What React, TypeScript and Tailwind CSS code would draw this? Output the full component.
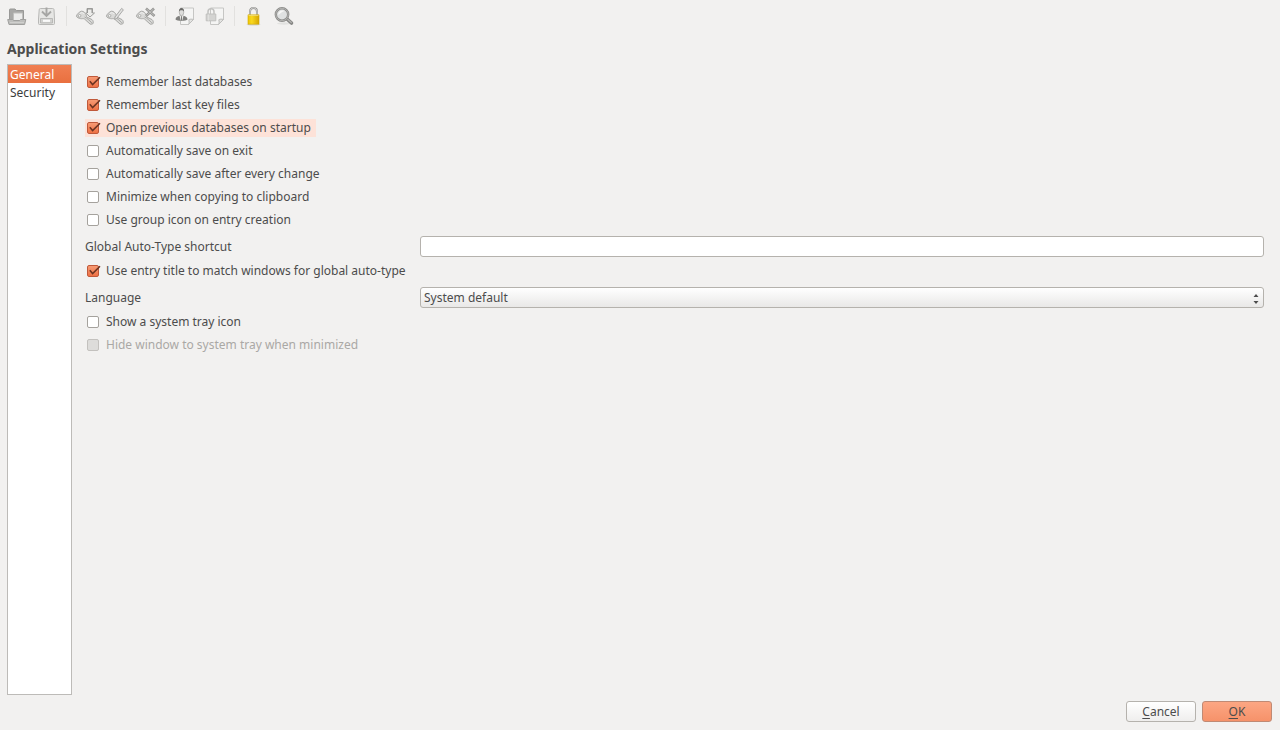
import { useState, type ReactNode } from 'react';

type ToolbarAction = {
  label: string;
  icon: ReactNode;
  disabled?: boolean;
};

function KeyIcon({ children }: { children: ReactNode }) {
  return (
    <svg viewBox="0 0 22 22" className="h-[22px] w-[22px]" aria-hidden="true">
      <path
        d="M1.5 11.2 C1.5 9.5 4.5 6.6 6.5 6.2 C8.5 6 10.8 8.3 11.2 10 C11.4 11 11.3 11.6 11.8 12 L17 14.6 C18.4 15.5 18.7 18 17.6 19 L15.2 19.2 L9.5 14 C8 13.2 7 14 5.5 13.6 C3.8 13.2 1.5 12.4 1.5 11.2 Z"
        fill="#dadad8"
        stroke="#a8a8a6"
        strokeLinejoin="round"
      />
      <path d="M9.5 12 C12 13 14.5 15.5 16.8 17.8" stroke="#aaaaa8" fill="none" />
      <path d="M5 8.5 C6.5 7.2 8 7.5 9 9" stroke="#efefee" fill="none" />
      <circle cx="4.6" cy="10.8" r="1.3" fill="#f4f4f3" stroke="#999997" strokeWidth="0.7" />
      {children}
    </svg>
  );
}

function OpenIcon() {
  return (
    <svg viewBox="0 0 22 22" className="h-[22px] w-[22px]" aria-hidden="true">
      <path d="M3.5 15 V4.8 C3.5 4.2 3.8 4 4.3 4 H9 L10.3 5.5 H17.5 V15 Z" fill="#a9a9a7" stroke="#989896" strokeLinejoin="round" />
      <path d="M7.5 8 H16.5 V15.5 H7.5 Z" fill="#ececeb" stroke="#c0c0be" />
      <path d="M1.7 14.5 H6.5 L7.5 15.5 H13.5 L14.5 14.5 H19.8 L18.6 19.5 H3 Z" fill="#bebebc" stroke="#a0a09e" strokeLinejoin="round" />
      <path d="M4 17.5 H18" stroke="#d0d0ce" />
    </svg>
  );
}

function SaveIcon() {
  return (
    <svg viewBox="0 0 22 22" className="h-[22px] w-[22px]" aria-hidden="true">
      <path d="M4.5 3.5 H16.5 C17.6 3.5 18 4 18 5 L18.5 14 V18.5 C18.5 19.2 18.2 19.5 17.5 19.5 H3.5 C2.8 19.5 2.5 19.2 2.5 18.5 V14 L3.2 5 C3.3 4 3.5 3.5 4.5 3.5 Z" fill="#e6e6e4" stroke="#b8b8b6" />
      <path d="M4.5 13.5 H16.5 V18 H4.5 Z" fill="#d2d2d0" stroke="#b8b8b6" />
      <path d="M7 15.8 H14" stroke="#fafafa" strokeWidth="2.2" />
      <path d="M10.5 2.5 V11 M6 6.5 L10.5 11 L15 6.5" fill="none" stroke="#a6a6a4" strokeWidth="1.9" />
    </svg>
  );
}

function AddKeyIcon() {
  return (
    <KeyIcon>
      <path d="M12 3.5 H17.5 V8 H19.5 L15 12 L10.8 8 H12 Z" fill="#ececea" stroke="#a0a09e" strokeLinejoin="round" />
      <path d="M12.5 4 V8 M12 4 H17.5 M17 4 V8" stroke="#969694" />
    </KeyIcon>
  );
}

function EditKeyIcon() {
  return (
    <KeyIcon>
      <path d="M10 12 L16.6 3.4 L18.4 4.8 L11.8 13.4 L9.6 14.4 Z" fill="#e2e2e0" stroke="#a3a3a1" strokeWidth="0.9" strokeLinejoin="round" />
    </KeyIcon>
  );
}

function DeleteKeyIcon() {
  return (
    <KeyIcon>
      <path d="M11 3.5 L19.5 11 M19 3.5 L11 11" stroke="#969694" strokeWidth="2.6" />
      <path d="M11.5 4 L19 10.5 M18.5 4 L11.5 10.5" stroke="#c2c2c0" />
    </KeyIcon>
  );
}

function PageShape() {
  return (
    <>
      <path d="M6.5 3 H19.5 V14.5 L14.5 19.5 H6.5 Z" fill="#f5f5f4" stroke="#c6c6c4" strokeLinejoin="round" />
      <path d="M19.5 14.5 C17.5 14 16 14 14.8 14.8 C15.4 16.5 15.2 18 14.5 19.5 Z" fill="#e4e4e2" stroke="#bdbdbb" strokeLinejoin="round" />
    </>
  );
}

function CopyUserIcon() {
  return (
    <svg viewBox="0 0 22 22" className="h-[22px] w-[22px]" aria-hidden="true">
      <PageShape />
      <path d="M1.5 14.5 C1.5 12 3.5 11.5 5.5 10.8 H9.5 C11.5 11.5 13.5 12 13.5 14.5 C12.5 16.4 2.5 16.4 1.5 14.5 Z" fill="#80807e" />
      <path d="M5.5 10.8 H9.5 L8.3 15.6 H6.7 Z" fill="#e9e9e7" />
      <path d="M7.5 11.2 V15.6" stroke="#6f6f6d" strokeWidth="0.9" />
      <ellipse cx="7.5" cy="7" rx="2.3" ry="3.6" fill="#dededc" stroke="#9a9a98" strokeWidth="0.6" />
      <path d="M5 6.5 C4.6 1.8 10.4 1.8 10 6.5 C9 4.8 6 4.8 5 6.5 Z" fill="#6a6a68" />
    </svg>
  );
}

function CopyPasswordIcon() {
  return (
    <svg viewBox="0 0 22 22" className="h-[22px] w-[22px]" aria-hidden="true">
      <PageShape />
      <path d="M4 10 V6.8 C4 2.8 10 2.8 10 6.8 V10" fill="none" stroke="#c2c2c0" strokeWidth="1.5" />
      <path d="M2.2 9 H11.8 V15.8 H2.2 Z" fill="#d4d4d2" stroke="#c0c0be" strokeLinejoin="round" />
      <path d="M4.5 9.5 V15.5" stroke="#e0e0de" />
    </svg>
  );
}

function LockIcon() {
  return (
    <svg viewBox="0 0 22 22" className="h-[22px] w-[22px]" aria-hidden="true">
      <defs>
        <linearGradient id="lock-body" x1="0" x2="1">
          <stop offset="0" stopColor="#eec604" />
          <stop offset="0.35" stopColor="#f9d820" />
          <stop offset="1" stopColor="#d6a600" />
        </linearGradient>
      </defs>
      <ellipse cx="10.5" cy="19.7" rx="7" ry="0.9" fill="#d2d2d0" />
      <path d="M7 11 V6.8 C7 1.6 14 1.6 14 6.8 V11" fill="none" stroke="#91918f" strokeWidth="2" />
      <path d="M7 11 V6.8 C7 1.6 14 1.6 14 6.8 V11" fill="none" stroke="#dadad8" strokeWidth="0.9" />
      <path d="M5 9.8 H16 V19.2 H5 Z" fill="url(#lock-body)" stroke="#d2a800" strokeWidth="0.6" strokeLinejoin="round" />
      <path d="M5.5 10.4 H15.5" stroke="#f2e08a" strokeWidth="0.8" />
    </svg>
  );
}

function SearchIcon() {
  return (
    <svg viewBox="0 0 22 22" className="h-[22px] w-[22px]" aria-hidden="true">
      <ellipse cx="11" cy="18.5" rx="7" ry="1.2" fill="#e2e2e0" />
      <path d="M14 14 L18.5 18" stroke="#858583" strokeWidth="3.6" strokeLinecap="round" />
      <path d="M14.5 14.2 L18.3 17.5" stroke="#b5b5b3" strokeWidth="1.2" strokeLinecap="round" />
      <circle cx="9" cy="9.5" r="6.2" fill="#dfe1e1" stroke="#8c8c8a" strokeWidth="2.4" />
      <circle cx="9" cy="9.5" r="6.2" fill="none" stroke="#b5b5b3" strokeWidth="0.9" />
      <path d="M5.3 10 C5 6.5 8 4.8 11.5 6 C9 7 7 8.5 5.3 10 Z" fill="#f6f6f5" />
    </svg>
  );
}

const toolbarGroups: ToolbarAction[][] = [
  [
    { label: 'Open database', icon: <OpenIcon />, disabled: true },
    { label: 'Save database', icon: <SaveIcon />, disabled: true },
  ],
  [
    { label: 'Add new entry', icon: <AddKeyIcon />, disabled: true },
    { label: 'View/Edit entry', icon: <EditKeyIcon />, disabled: true },
    { label: 'Delete entry', icon: <DeleteKeyIcon />, disabled: true },
  ],
  [
    { label: 'Copy username', icon: <CopyUserIcon />, disabled: true },
    { label: 'Copy password', icon: <CopyPasswordIcon />, disabled: true },
  ],
  [
    { label: 'Lock databases', icon: <LockIcon /> },
    { label: 'Search', icon: <SearchIcon />, disabled: true },
  ],
];

function Toolbar() {
  return (
    <div role="toolbar" className="flex items-center px-1.5 pt-[5px]">
      {toolbarGroups.map((group, index) => (
        <div key={group[0].label} className="flex items-center">
          {index > 0 && <div className="mx-2 h-5 w-px bg-[#e2e1df]" />}
          <div className="flex items-center gap-2">
            {group.map((action) => (
              <button key={action.label} type="button" aria-label={action.label} disabled={action.disabled}>
                {action.icon}
              </button>
            ))}
          </div>
        </div>
      ))}
    </div>
  );
}

function CheckOption({
  label,
  defaultChecked = false,
  disabled = false,
  highlighted = false,
}: {
  label: string;
  defaultChecked?: boolean;
  disabled?: boolean;
  highlighted?: boolean;
}) {
  return (
    <label
      className={`flex h-[18px] items-center gap-[7px] self-start pl-0.5 pr-[5px] ${
        highlighted ? 'bg-[#fde2d8]' : ''
      } ${disabled ? 'text-[#aaa8a5]' : ''}`}
    >
      <span className="relative flex">
        <input
          type="checkbox"
          defaultChecked={defaultChecked}
          disabled={disabled}
          className="peer h-3 w-3 appearance-none rounded-[2px] border border-[#a5a29d] bg-white checked:border-[#c0593a] checked:bg-linear-to-b checked:from-[#f79a73] checked:to-[#ee7144] disabled:border-[#c3c1be] disabled:bg-[#dddcda]"
        />
        <svg
          viewBox="0 0 14 14"
          className="pointer-events-none absolute -top-px left-0 hidden h-3.5 w-3.5 peer-checked:block"
          aria-hidden="true"
        >
          <path d="M2.8 6.2 L5.6 9.6 L13 2.2" fill="none" stroke="#6b3321" strokeWidth="1.5" />
        </svg>
      </span>
      {label}
    </label>
  );
}

function GeneralSettings() {
  return (
    <div className="flex flex-1 flex-col gap-[5px] pl-[13px] pr-2 pt-[9px]">
      <CheckOption label="Remember last databases" defaultChecked />
      <CheckOption label="Remember last key files" defaultChecked />
      <CheckOption label="Open previous databases on startup" defaultChecked highlighted />
      <CheckOption label="Automatically save on exit" />
      <CheckOption label="Automatically save after every change" />
      <CheckOption label="Minimize when copying to clipboard" />
      <CheckOption label="Use group icon on entry creation" />

      <div className="mt-0.5 grid grid-cols-[335px_1fr] items-center">
        <label htmlFor="autotype-shortcut">Global Auto-Type shortcut</label>
        <input
          id="autotype-shortcut"
          type="text"
          className="h-[21px] rounded-[3px] border border-[#b5b2ad] bg-white px-[3px] outline-none"
        />
      </div>

      <CheckOption label="Use entry title to match windows for global auto-type" defaultChecked />

      <div className="mt-0.5 grid grid-cols-[335px_1fr] items-center">
        <label htmlFor="language">Language</label>
        <div className="relative flex">
          <select
            id="language"
            className="h-[21px] w-full appearance-none rounded-[3px] border border-[#b5b2ad] bg-linear-to-b from-white to-[#e9e8e7] px-[3px] outline-none"
          >
            <option>System default</option>
          </select>
          <svg
            viewBox="0 0 6 12"
            className="pointer-events-none absolute right-[5px] top-1.5 h-3 w-1.5"
            aria-hidden="true"
          >
            <path d="M0.5 4 L3 1 L5.5 4 Z M0.5 8 L3 11 L5.5 8 Z" fill="#4c4c4c" />
          </svg>
        </div>
      </div>

      <CheckOption label="Show a system tray icon" />
      <CheckOption label="Hide window to system tray when minimized" disabled />
    </div>
  );
}

const categories = ['General', 'Security'];

export default function App() {
  const [category, setCategory] = useState('General');

  return (
    <div className="flex min-h-screen flex-col bg-[#f2f1f0] font-['Noto_Sans',sans-serif] text-[12px] leading-[18px] text-[#4c4c4c]">
      <Toolbar />

      <main className="flex flex-1 flex-col px-2 pb-2 pt-[13px]">
        <h1 className="-ml-px text-[14px] font-bold text-[#4c4c4c]">Application Settings</h1>

        <div className="-ml-px mt-1.5 flex flex-1">
          <nav className="flex w-[65px] flex-col border border-[#bdbbb8] bg-white">
            {categories.map((name) => (
              <button
                key={name}
                type="button"
                onClick={() => setCategory(name)}
                className={`h-[18px] px-0.5 pt-px text-left ${
                  name === category
                    ? 'bg-linear-to-b from-[#f07f52] to-[#e9703f] text-white'
                    : 'text-[#3c3c3c]'
                }`}
              >
                {name}
              </button>
            ))}
          </nav>

          <GeneralSettings />
        </div>

        <div className="mt-1.5 flex justify-end gap-1.5">
          <button
            type="button"
            className="h-[21px] w-[70px] rounded-[3px] border border-[#b5b2ad] bg-linear-to-b from-white to-[#efeeed]"
          >
            <span className="underline underline-offset-2">C</span>ancel
          </button>
          <button
            type="button"
            className="h-[21px] w-[70px] rounded-[3px] border border-[#c08a74] bg-linear-to-b from-[#fca683] to-[#f6926a]"
          >
            <span className="underline underline-offset-2">O</span>K
          </button>
        </div>
      </main>
    </div>
  );
}
